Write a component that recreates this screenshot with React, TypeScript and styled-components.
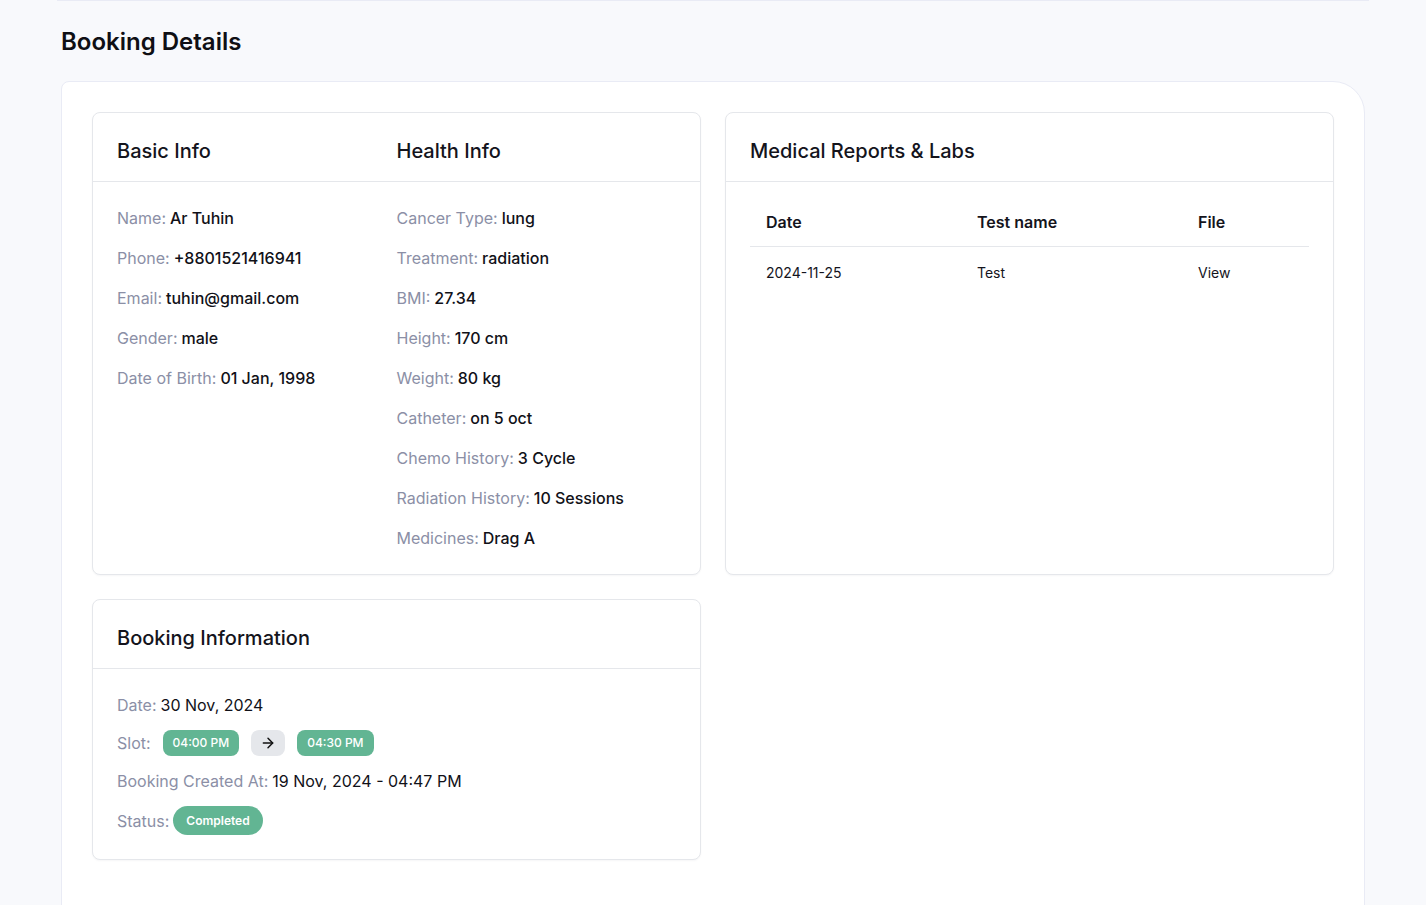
import React from "react";
import styled, { createGlobalStyle } from "styled-components";
import { ArrowRight } from "lucide-react";

const GlobalStyle = createGlobalStyle`
  html, body { margin: 0; padding: 0; }
  body {
    background: #f8f9fc;
    font-family: Inter, "Noto Sans", Arial, sans-serif;
    color: #111827;
    -webkit-font-smoothing: antialiased;
  }
  * { box-sizing: border-box; }
`;

const Page = styled.div`
  padding: 0 57px 0 57px;
`;

const TopRule = styled.div`
  height: 1px;
  background: #e9ebf5;
`;

const Content = styled.div`
  padding: 25px 4px 0 4px;
`;

const Title = styled.h1`
  margin: 0 0 23px 0;
  font-size: 24px;
  line-height: 32px;
  font-weight: 600;
  color: #0f0f14;
`;

const Shell = styled.div`
  background: #ffffff;
  border: 1px solid #e9ebf5;
  border-radius: 8px 32px 0 0;
  padding: 30px 30px 60px 30px;
`;

const Grid = styled.div`
  display: grid;
  grid-template-columns: 1fr 1fr;
  gap: 24px;
  align-items: stretch;
`;

const Card = styled.section`
  background: #fff;
  border: 1px solid #e5e7eb;
  border-radius: 8px;
  box-shadow: 0 1px 2px rgba(16, 24, 40, 0.04);
  display: flex;
  flex-direction: column;
`;

const CardHeader = styled.div<{ $cols?: number }>`
  display: grid;
  grid-template-columns: repeat(${(p) => p.$cols ?? 1}, 1fr);
  padding: 28px 24px 20px 24px;
  border-bottom: 1px solid #e5e7eb;
`;

const CardTitle = styled.h2`
  margin: 0;
  font-size: 20px;
  line-height: 20px;
  font-weight: 500;
  color: #14141c;
`;

const CardBody = styled.div<{ $cols?: number }>`
  display: grid;
  grid-template-columns: repeat(${(p) => p.$cols ?? 1}, 1fr);
  padding: 24px;
  align-items: start;
`;

const FieldList = styled.div<{ $gap: number }>`
  display: flex;
  flex-direction: column;
  gap: ${(p) => p.$gap}px;
`;

const Field = styled.div`
  display: flex;
  align-items: center;
  font-size: 16px;
  line-height: 24px;
  white-space: nowrap;
`;

const Label = styled.span`
  color: #8b8fa6;
  font-weight: 400;
  margin-right: 4px;
`;

const Value = styled.span<{ $weight?: number }>`
  color: #111118;
  font-weight: ${(p) => p.$weight ?? 500};
`;

const Pill = styled.span<{ $tone: "green" | "gray"; $round?: boolean }>`
  display: inline-flex;
  align-items: center;
  justify-content: center;
  height: ${(p) => (p.$round ? 29 : 26)}px;
  padding: 0 ${(p) => (p.$round ? 13 : p.$tone === "gray" ? 9 : 10)}px;
  border-radius: ${(p) => (p.$round ? 999 : 8)}px;
  background: ${(p) => (p.$tone === "green" ? "#62b593" : "#e5e7eb")};
  color: ${(p) => (p.$tone === "green" ? "#ffffff" : "#111")};
  font-size: 12px;
  font-weight: ${(p) => (p.$round ? 600 : 500)};
  line-height: 1;
`;

const SlotRow = styled.div`
  display: flex;
  align-items: center;
  gap: 12px;
  margin-left: 8px;
`;

const Table = styled.table`
  width: 100%;
  border-collapse: collapse;
  text-align: left;
`;

const Th = styled.th<{ $w?: number }>`
  width: ${(p) => (p.$w ? `${p.$w}px` : "auto")};
  padding: 4px 16px 12px 16px;
  font-size: 16px;
  line-height: 24px;
  font-weight: 600;
  color: #14141c;
  border-bottom: 1px solid #e5e7eb;
`;

const Td = styled.td`
  padding: 16px 16px 14px 16px;
  font-size: 14px;
  line-height: 20px;
  color: #14141c;
`;

const basic = [
  ["Name", "Ar Tuhin"],
  ["Phone", "+8801521416941"],
  ["Email", "tuhin@gmail.com"],
  ["Gender", "male"],
  ["Date of Birth", "01 Jan, 1998"],
];

const health = [
  ["Cancer Type", "lung"],
  ["Treatment", "radiation"],
  ["BMI", "27.34"],
  ["Height", "170 cm"],
  ["Weight", "80 kg"],
  ["Catheter", "on 5 oct"],
  ["Chemo History", "3 Cycle"],
  ["Radiation History", "10 Sessions"],
  ["Medicines", "Drag A"],
];

export default function App() {
  return (
    <>
      <GlobalStyle />
      <Page>
        <TopRule />
        <Content>
          <Title>Booking Details</Title>
          <Shell>
            <Grid>
              <Card>
                <CardHeader $cols={2}>
                  <CardTitle>Basic Info</CardTitle>
                  <CardTitle>Health Info</CardTitle>
                </CardHeader>
                <CardBody $cols={2}>
                  <FieldList $gap={16}>
                    {basic.map(([l, v]) => (
                      <Field key={l}>
                        <Label>{l}:</Label>
                        <Value>{v}</Value>
                      </Field>
                    ))}
                  </FieldList>
                  <FieldList $gap={16}>
                    {health.map(([l, v]) => (
                      <Field key={l}>
                        <Label>{l}:</Label>
                        <Value>{v}</Value>
                      </Field>
                    ))}
                  </FieldList>
                </CardBody>
              </Card>

              <Card>
                <CardHeader>
                  <CardTitle>Medical Reports &amp; Labs</CardTitle>
                </CardHeader>
                <CardBody>
                  <Table>
                    <thead>
                      <tr>
                        <Th $w={211}>Date</Th>
                        <Th $w={221}>Test name</Th>
                        <Th>File</Th>
                      </tr>
                    </thead>
                    <tbody>
                      <tr>
                        <Td>2024-11-25</Td>
                        <Td>Test</Td>
                        <Td>View</Td>
                      </tr>
                    </tbody>
                  </Table>
                </CardBody>
              </Card>

              <Card>
                <CardHeader>
                  <CardTitle>Booking Information</CardTitle>
                </CardHeader>
                <CardBody>
                  <FieldList $gap={13}>
                    <Field>
                      <Label>Date:</Label>
                      <Value $weight={400}>30 Nov, 2024</Value>
                    </Field>
                    <Field>
                      <Label>Slot:</Label>
                      <SlotRow>
                        <Pill $tone="green">04:00 PM</Pill>
                        <Pill $tone="gray">
                          <ArrowRight size={16} strokeWidth={2.2} color="#111" />
                        </Pill>
                        <Pill $tone="green">04:30 PM</Pill>
                      </SlotRow>
                    </Field>
                    <Field>
                      <Label>Booking Created At:</Label>
                      <Value $weight={400}>19 Nov, 2024 - 04:47 PM</Value>
                    </Field>
                    <Field>
                      <Label>Status:</Label>
                      <Pill $tone="green" $round>
                        Completed
                      </Pill>
                    </Field>
                  </FieldList>
                </CardBody>
              </Card>
            </Grid>
          </Shell>
        </Content>
      </Page>
    </>
  );
}
